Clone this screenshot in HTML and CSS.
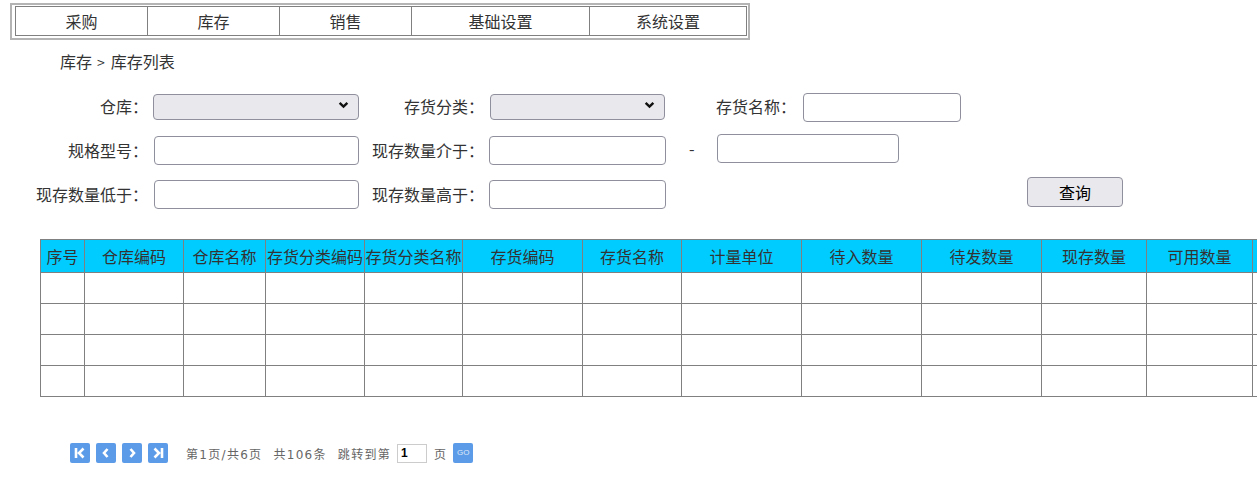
FILE: index.html
```html
<!DOCTYPE html>
<html lang="zh-CN">
<head>
    <meta charset="UTF-8">
    <title>库存列表</title>
    <link rel="stylesheet" href="styles.css">
</head>
<body>
    <div class="topnav">
        <table>
            <tr>
                <td class="w132">采购</td>
                <td class="w132">库存</td>
                <td class="w132">销售</td>
                <td class="w178">基础设置</td>
                <td class="w157">系统设置</td>
            </tr>
        </table>
    </div>

    <div class="crumb">库存<span class="sep">&gt;</span>库存列表</div>

    <form class="search">
        <label class="lbl">仓库：</label>
        <span class="sel sel-wide"><select></select><svg viewBox="0 0 10 7"><path d="M1.5 1.5 L5 5 L8.5 1.5" /></svg></span>
        <label class="lbl">存货分类：</label>
        <span class="sel sel-mid"><select></select><svg viewBox="0 0 10 7"><path d="M1.5 1.5 L5 5 L8.5 1.5" /></svg></span>
        <span></span>
        <label class="lbl-left">存货名称：</label>
        <input class="inp name" type="text">

        <label class="lbl">规格型号：</label>
        <input class="inp wide" type="text">
        <label class="lbl">现存数量介于：</label>
        <input class="inp mid" type="text">
        <span class="dash">-</span>
        <input class="inp to" type="text">

        <label class="lbl">现存数量低于：</label>
        <input class="inp wide" type="text">
        <label class="lbl">现存数量高于：</label>
        <input class="inp mid" type="text">
        <span></span>
        <span></span>
        <button class="btn-query" type="button">查询</button>
    </form>

    <div class="grid-wrap">
        <table class="grid">
            <colgroup>
                <col style="width:44px"><col style="width:99px"><col style="width:82px">
                <col style="width:99px"><col style="width:98px"><col style="width:120px">
                <col style="width:99px"><col style="width:120px"><col style="width:120px">
                <col style="width:120px"><col style="width:105px"><col style="width:106px">
                <col style="width:100px">
            </colgroup>
            <thead>
                <tr>
                    <th>序号</th><th>仓库编码</th><th>仓库名称</th><th>存货分类编码</th><th>存货分类名称</th>
                    <th>存货编码</th><th>存货名称</th><th>计量单位</th><th>待入数量</th><th>待发数量</th>
                    <th>现存数量</th><th>可用数量</th><th></th>
                </tr>
            </thead>
            <tbody id="rows"></tbody>
        </table>
    </div>

    <div class="pager">
        <a class="pbtn" href="#"><svg viewBox="0 0 20 20"><path d="M6 5 V15 M13.5 5.5 L9 10 L13.5 14.5" /></svg></a>
        <a class="pbtn" href="#"><svg viewBox="0 0 20 20"><path d="M11.5 6 L8 10 L11.5 14" /></svg></a>
        <a class="pbtn" href="#"><svg viewBox="0 0 20 20"><path d="M8.5 6 L12 10 L8.5 14" /></svg></a>
        <a class="pbtn" href="#"><svg viewBox="0 0 20 20"><path d="M6.5 5.5 L11 10 L6.5 14.5 M14 5 V15" /></svg></a>
        <span class="ptext first">第1页/共6页</span>
        <span class="ptext">共106条</span>
        <span class="ptext">跳转到第</span>
        <input class="pinput" type="text" value="1">
        <span class="ptext">页</span>
        <a class="go" href="#">GO</a>
    </div>

    <script>
        const rows = document.getElementById('rows');
        for (let i = 0; i < 4; i++) {
            const tr = document.createElement('tr');
            for (let j = 0; j < 13; j++) {
                tr.appendChild(document.createElement('td'));
            }
            rows.appendChild(tr);
        }
    </script>
</body>
</html>
```

FILE: styles.css
```css
body {
    margin: 0;
    font-family: "Noto Sans CJK SC", "Liberation Sans", sans-serif;
    font-size: 16px;
    color: #333;
    background: #fff;
}
.topnav {
    display: inline-block;
    margin: 3px 0 0 10px;
    border: 2px solid #b4b4b4;
    padding: 1px 1px 2px 3px;
}
.topnav table {
    border-collapse: collapse;
    table-layout: fixed;
}
.topnav td {
    border: 1px solid #808080;
    height: 28px;
    padding: 0;
    text-align: center;
    line-height: 28px;
}
.w132 { width: 131px; }
.w178 { width: 177px; }
.w157 { width: 156px; }

.crumb {
    margin: 5px 0 0 60px;
    line-height: 22px;
}
.crumb .sep {
    margin: 0 6px 0 5px;
    font-size: 14px;
}

.search {
    display: grid;
    grid-template-columns: 148px 224px 112px 196px 36px 80px 1fr;
    grid-auto-rows: 44px;
    align-items: center;
    margin-top: 11px;
}
.lbl {
    text-align: right;
    white-space: nowrap;
}
.lbl-left {
    white-space: nowrap;
}
.sel {
    position: relative;
    display: inline-block;
    height: 26px;
}
.sel select {
    appearance: none;
    -webkit-appearance: none;
    width: 100%;
    height: 26px;
    background: #e9e9ed;
    border: 1px solid #8f8f9d;
    border-radius: 4px;
    margin: 0;
}
.sel svg {
    position: absolute;
    right: 10px;
    top: 9px;
    width: 11px;
    height: 8px;
    fill: none;
    stroke: #111;
    stroke-width: 2.2;
}
.sel-wide {
    width: 206px;
    margin-left: 5px;
    margin-top: -2px;
}
.sel-mid {
    width: 175px;
    margin-left: 6px;
    margin-top: -2px;
}
.inp {
    box-sizing: border-box;
    height: 29px;
    border: 1px solid #8f8f9d;
    border-radius: 4px;
    padding: 0 4px;
    margin: 0;
}
.inp.wide {
    width: 205px;
    margin-left: 6px;
}
.inp.mid {
    width: 177px;
    margin-left: 5px;
}
.inp.name {
    width: 158px;
    margin-left: 7px;
    margin-top: 2px;
}
.inp.to {
    grid-column: span 2;
    width: 182px;
    margin-left: 1px;
    margin-top: -3px;
}
.dash {
    padding-left: 9px;
    margin-top: -4px;
}
.btn-query {
    width: 96px;
    height: 30px;
    margin-left: 231px;
    margin-top: -4px;
    background: #e9e9ed;
    border: 1px solid #8f8f9d;
    border-radius: 4px;
    font-family: "Noto Sans CJK SC", sans-serif;
    font-size: 16px;
    color: #000;
    padding: 0;
}

.grid-wrap {
    margin: 23px 0 0 40px;
    overflow: hidden;
}
.grid {
    border-collapse: collapse;
    table-layout: fixed;
    width: 1312px;
}
.grid th,
.grid td {
    border: 1px solid #808080;
    padding: 0;
    white-space: nowrap;
    overflow: hidden;
}
.grid th {
    background: #00ccff;
    font-weight: normal;
    height: 32px;
    color: #333;
}
.grid td {
    height: 30px;
}

.pager {
    display: flex;
    align-items: center;
    margin: 46px 0 0 70px;
    font-family: "DejaVu Sans", "Noto Sans CJK SC", sans-serif;
    font-size: 12px;
    color: #666;
}
.pbtn {
    display: block;
    width: 20px;
    height: 20px;
    background: #5b9be8;
    border-radius: 2px;
    margin-right: 6px;
}
.pbtn svg {
    display: block;
    width: 20px;
    height: 20px;
    fill: none;
    stroke: #fff;
    stroke-width: 2.6;
}
.ptext {
    margin-right: 11px;
    letter-spacing: 1.3px;
}
.ptext.first {
    margin-left: 12px;
}
.pinput {
    box-sizing: border-box;
    width: 30px;
    height: 19px;
    border: 1px solid #ccc;
    padding: 0 3px;
    margin: 0 7px 0 -5px;
    font-family: "Liberation Sans", sans-serif;
    font-size: 12px;
    font-weight: bold;
    color: #000;
}
.go {
    display: block;
    width: 20px;
    height: 20px;
    margin-left: -5px;
    background: #5b9be8;
    border-radius: 2px;
    color: #dfe9f8;
    font-family: "Liberation Sans", sans-serif;
    font-size: 8px;
    line-height: 20px;
    text-align: center;
    text-decoration: none;
}
```
